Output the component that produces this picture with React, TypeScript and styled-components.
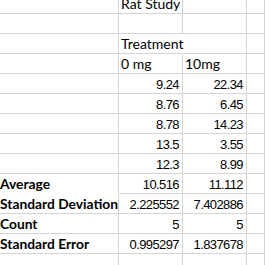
import styled, { createGlobalStyle } from 'styled-components';

const GlobalStyle = createGlobalStyle`
  html, body {
    margin: 0;
    padding: 0;
    background: #ffffff;
    overflow: hidden;
  }
`;

const Sheet = styled.div`
  display: grid;
  grid-template-columns: 119px 64px 64px 1fr;
  grid-template-rows: 14px;
  grid-auto-rows: 20px;
  width: 265px;
  height: 265px;
  overflow: hidden;
  background: #ffffff;
`;

const Cell = styled.div<{ $align?: 'left' | 'right'; $kind?: 'text' | 'num' | 'label'; $spill?: boolean; $open?: boolean }>`
  box-sizing: border-box;
  display: flex;
  align-items: flex-end;
  justify-content: ${(p) => (p.$align === 'right' ? 'flex-end' : 'flex-start')};
  padding: 0 3px 2px 2px;
  border-right: 1px solid ${(p) => (p.$spill ? 'transparent' : '#d4d4d4')};
  border-bottom: 1px solid ${(p) => (p.$open ? 'transparent' : '#d4d4d4')};
  white-space: nowrap;
  overflow: visible;
  position: relative;
  z-index: ${(p) => (p.$spill ? 1 : 0)};
  color: #000000;
  font-family: ${(p) => (p.$kind === 'num' ? '"Liberation Sans", Arial, sans-serif' : 'Lato, "Open Sans", sans-serif')};
  font-size: ${(p) => (p.$kind === 'num' ? '13px' : p.$kind === 'label' ? '13.8px' : '14px')};
  font-weight: ${(p) => (p.$kind === 'label' ? 700 : 400)};
  letter-spacing: ${(p) => (p.$kind === 'num' ? '-0.6px' : '0')};
  line-height: ${(p) => (p.$kind === 'num' ? '13px' : '14px')};
`;

const LabelCell = styled(Cell)`
  padding-left: 0;
`;

interface Row {
  label?: string;
  b?: string | number;
  c?: string | number;
  text?: boolean;
  spill?: boolean;
  openLabel?: boolean;
}

const rows: Row[] = [
  { b: 'Rat Study', text: true },
  {},
  { b: 'Treatment', text: true, spill: true },
  { b: '0 mg', c: '10mg', text: true },
  { b: 9.24, c: 22.34 },
  { b: 8.76, c: 6.45 },
  { b: 8.78, c: 14.23 },
  { b: 13.5, c: 3.55 },
  { b: 12.3, c: 8.99 },
  { label: 'Average', b: 10.516, c: 11.112, openLabel: true },
  { label: 'Standard Deviation', b: 2.225552, c: 7.402886 },
  { label: 'Count', b: 5, c: 5 },
  { label: 'Standard Error', b: 0.995297, c: 1.837678 },
  {},
];

function App() {
  return (
    <>
      <GlobalStyle />
      <Sheet>
        {rows.map((r, i) => {
          const kind = r.text ? 'text' : 'num';
          const align = r.text ? 'left' : 'right';
          return [
            <LabelCell key={`a${i}`} $kind="label" $open={r.openLabel}>
              {r.label}
            </LabelCell>,
            <Cell key={`b${i}`} $kind={kind} $align={align} $spill={r.spill}>
              {r.b}
            </Cell>,
            <Cell key={`c${i}`} $kind={kind} $align={align}>
              {r.c}
            </Cell>,
            <Cell key={`d${i}`} />,
          ];
        })}
      </Sheet>
    </>
  );
}

export default App;
